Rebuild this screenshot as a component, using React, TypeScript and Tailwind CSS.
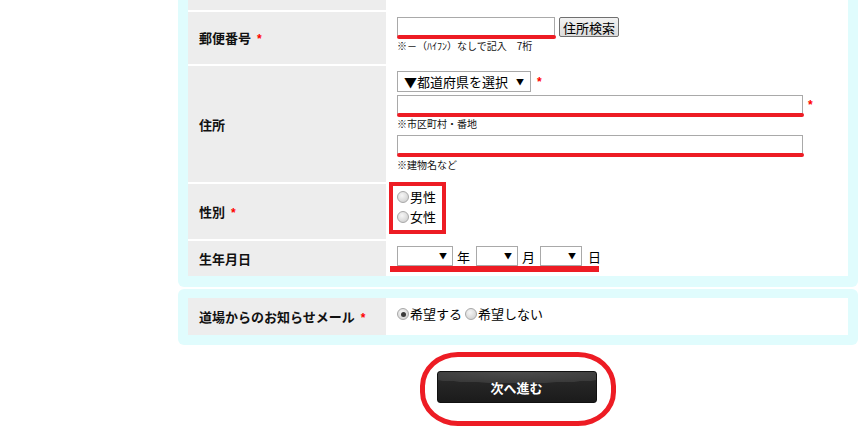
import React from 'react';

const font = "font-['Noto_Sans_CJK_JP','Liberation_Sans',sans-serif]";

function Star({ className = '' }: { className?: string }) {
    return (
        <span className={`font-['Liberation_Sans',sans-serif] text-[12px] font-bold text-[#ff0000] ${className}`}>*</span>
    );
}

// red marker line drawn under a field
function Marker({ className }: { className: string }) {
    return <span className={`absolute h-[4px] rounded-full bg-[#ed1c24] ${className}`} />;
}

function TextBox({ width }: { width: string }) {
    return (
        <div className={`relative h-[19px] ${width} border border-b-0 border-[#a9a9a9] bg-white`}>
            <Marker className="-left-[1px] -right-[2px] bottom-[-3px]" />
        </div>
    );
}

function SelectBox({ width, label }: { width: string; label?: string }) {
    return (
        <div className={`flex h-[20px] ${width} items-center justify-between border border-[#a9a9a9] bg-white pl-[6px] pr-[5px]`}>
            <span className="text-[13px] leading-none text-black">{label}</span>
            <span className="text-[8px] leading-none text-black">▼</span>
        </div>
    );
}

function Radio({ checked = false, label }: { checked?: boolean; label: string }) {
    return (
        <label className="flex items-center">
            <span className="flex h-[12px] w-[12px] items-center justify-center rounded-full border border-[#a8a8a8] bg-[radial-gradient(circle_at_40%_35%,#f6f6f6,#c9c9c9)]">
                {checked && <span className="h-[5px] w-[5px] rounded-full bg-[#3a3a3a]" />}
            </span>
            <span className="ml-[1px] text-[13px] leading-[18px] text-black">{label}</span>
        </label>
    );
}

function Row({ label, required, height, children }: { label?: string; required?: boolean; height: string; children?: React.ReactNode }) {
    return (
        <div className={`flex ${height}`}>
            <div className="flex w-[198px] shrink-0 items-center bg-[#ededed] pl-[11px]">
                {label && (
                    <span className="text-[13px] font-bold leading-none text-[#111]">
                        {label}
                        {required && <Star className="ml-[6px]" />}
                    </span>
                )}
            </div>
            <div className="flex-1 bg-white pl-[11px]">{children}</div>
        </div>
    );
}

export default function App() {
    return (
        <div className={`min-h-[444px] w-[867px] bg-white ${font}`}>
            <div className="ml-[178px] w-[680px]">
                {/* panel 1 */}
                <div className="rounded-b-[6px] bg-[#e0fcfd] px-[10px] pb-[11px]">
                    <div className="flex flex-col gap-[2px] bg-white">
                        <Row height="h-[10px]" />

                        <Row label="郵便番号" required height="h-[52px]">
                            <div className="pt-[5px]">
                                <div className="flex items-start gap-[4px]">
                                    <TextBox width="w-[158px]" />
                                    <button className="h-[20px] w-[60px] rounded-[2px] border border-[#707070] bg-[linear-gradient(#f2f2f2,#dcdcdc)] text-[13px] leading-none text-black">
                                        住所検索
                                    </button>
                                </div>
                                <p className="mt-[3px] text-[10px] leading-[12px] text-[#111]">※－（ﾊｲﾌﾝ）なしで記入　7桁</p>
                            </div>
                        </Row>

                        <Row label="住所" height="h-[116px]">
                            <div className="pt-[5px]">
                                <div className="flex items-center">
                                    <div className="flex h-[21px] w-[134px] items-center justify-between border border-[#a9a9a9] bg-white pl-[6px] pr-[6px]">
                                        <span className="text-[13px] leading-none text-black">▼都道府県を選択</span>
                                        <span className="text-[8px] leading-none text-black">▼</span>
                                    </div>
                                    <Star className="ml-[6px]" />
                                </div>
                                <div className="mt-[3px] flex items-center">
                                    <TextBox width="w-[406px]" />
                                    <Star className="ml-[5px]" />
                                </div>
                                <p className="mt-[4px] text-[10px] leading-[12px] text-[#111]">※市区町村・番地</p>
                                <div className="mt-[5px]">
                                    <TextBox width="w-[406px]" />
                                </div>
                                <p className="mt-[5px] text-[10px] leading-[12px] text-[#111]">※建物名など</p>
                            </div>
                        </Row>

                        <Row label="性別" required height="h-[55px]">
                            <div className="-ml-[8px] -mt-[2px] h-[52px] w-[57px] border-[4px] border-[#ed1c24] bg-white pl-[4px] pt-[2px]">
                                <Radio label="男性" />
                                <div className="mt-[2px]">
                                    <Radio label="女性" />
                                </div>
                            </div>
                        </Row>

                        <Row label="生年月日" height="h-[35px]">
                            <div className="relative flex w-[205px] items-center pt-[5px] text-[13px] leading-none text-black">
                                <SelectBox width="w-[56px]" />
                                <span className="ml-[4px]">年</span>
                                <span className="ml-[6px]"><SelectBox width="w-[42px]" /></span>
                                <span className="ml-[4px]">月</span>
                                <span className="ml-[5px]"><SelectBox width="w-[42px]" /></span>
                                <span className="ml-[6px]">日</span>
                                <span className="absolute -left-[7px] top-[25px] h-[6px] w-[209px] bg-[#ed1c24]" />
                            </div>
                        </Row>
                    </div>
                </div>

                {/* panel 2 */}
                <div className="mt-[2px] rounded-[6px] bg-[#e0fcfd] px-[10px] pb-[10px] pt-[9px]">
                    <Row label="道場からのお知らせメール" required height="h-[37px]">
                        <div className="flex items-center gap-[3px] pt-[7px]">
                            <Radio checked label="希望する" />
                            <Radio label="希望しない" />
                        </div>
                    </Row>
                </div>

                {/* next button */}
                <div className="mt-[7px] flex justify-center">
                    <div className="flex h-[74px] w-[196px] items-center justify-center rounded-[38px/34px] border-[5px] border-[#ed1c24] pb-[4px] pr-[3px]">
                        <button className="h-[32px] w-[160px] rounded-[3px] border border-[#111] bg-[radial-gradient(ellipse_95%_45%_at_50%_0%,#4c4c4c_0%,#3a3a3a_80%,transparent_82%),linear-gradient(#2c2c2c,#1b1b1b)] text-[13px] font-bold leading-none text-white">
                            次へ進む
                        </button>
                    </div>
                </div>
            </div>
        </div>
    );
}
